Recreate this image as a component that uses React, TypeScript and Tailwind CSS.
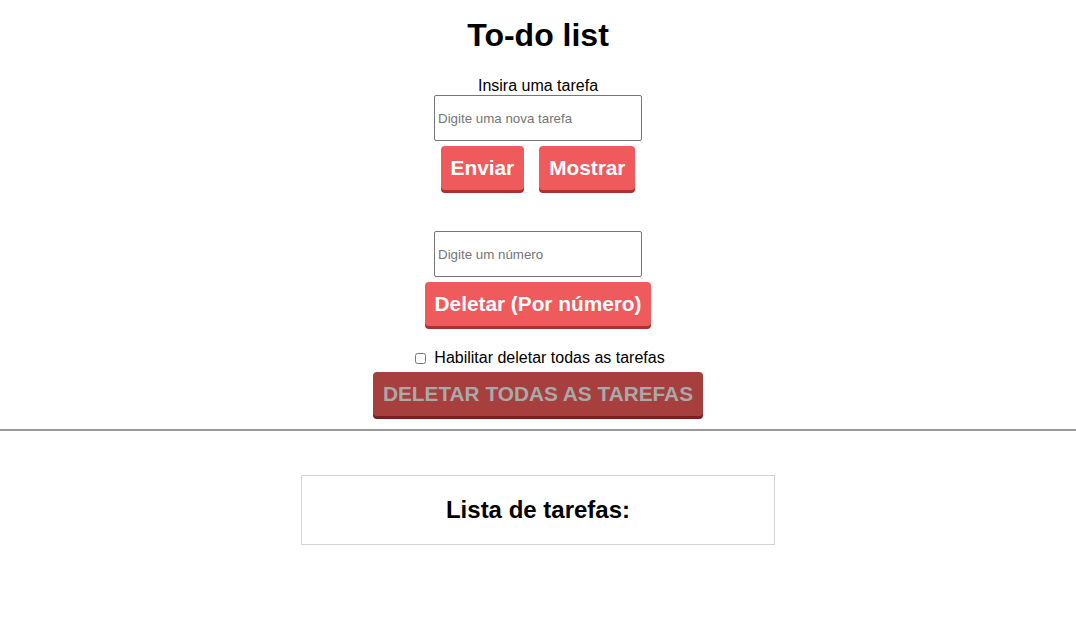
const redButton =
  "h-[44px] px-[10px] rounded-[4px] bg-[#ef5a5c] text-white text-[20.8px] font-bold shadow-[0_3px_0_#a83232] leading-none";

const App = () => {
  return (
    <div className="min-h-[624px] bg-white text-black font-['Liberation_Sans',Arial,sans-serif] flex flex-col items-center">
      <h1 className="pt-[17px] text-[32px] leading-[37px] font-bold">To-do list</h1>

      <label className="mt-[23px] text-[16px] leading-[18px]">Insira uma tarefa</label>
      <input
        type="text"
        placeholder="Digite uma nova tarefa"
        className="w-[208px] h-[46px] border border-[#767676] rounded-[2px] px-[3px] text-[13.33px] placeholder:text-[#757575] outline-none"
      />
      <div className="mt-[5px] flex gap-[15px]">
        <button className={redButton}>Enviar</button>
        <button className={redButton}>Mostrar</button>
      </div>

      <input
        type="text"
        placeholder="Digite um número"
        className="mt-[41px] w-[208px] h-[46px] border border-[#767676] rounded-[2px] px-[3px] text-[13.33px] placeholder:text-[#757575] outline-none"
      />
      <button className={"mt-[5px] " + redButton}>Deletar (Por número)</button>

      <div className="mt-[23px] flex items-center text-[16px] leading-[18px]">
        <input type="checkbox" className="w-[11px] h-[11px] mr-[8px] ml-[4px]" />
        <span>Habilitar deletar todas as tarefas</span>
      </div>

      <button
        disabled
        className="mt-[5px] h-[44px] px-[10px] rounded-[4px] bg-[#a73f3f] text-[#a9a9a9] text-[20.8px] font-bold shadow-[0_3px_0_#7a1f1f] leading-none"
      >
        DELETAR TODAS AS TAREFAS
      </button>

      <hr className="mt-[13px] w-full border-0 border-t-2 border-[#9a9a9a]" />

      <div className="mt-[44px] w-[474px] h-[70px] border border-[#d3d3d3] flex items-center justify-center">
        <h2 className="text-[24px] font-bold leading-[28px]">Lista de tarefas:</h2>
      </div>
    </div>
  );
};

export default App;
